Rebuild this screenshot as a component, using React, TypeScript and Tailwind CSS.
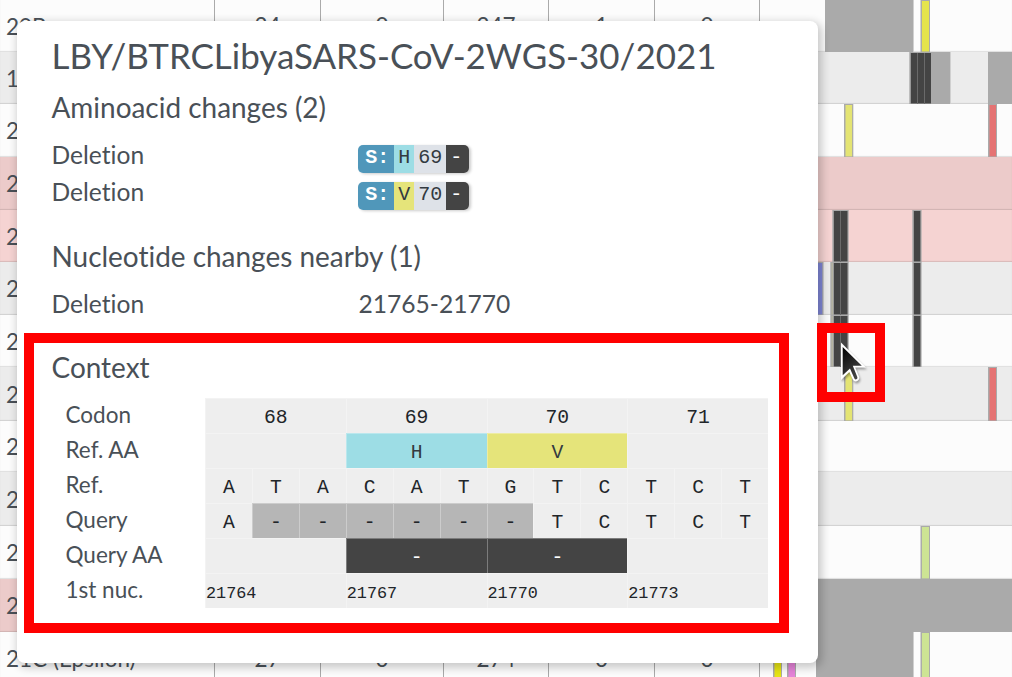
import React from "react";

type Mark = { x: number; w: number; fill: string; kind?: "block" | "joined" };
type Row = { h: string; bg: string; label: string; cells?: string[]; marks: Mark[] };

const DEL = "#444444";
const even = "bg-[#fcfcfc]";
const odd = "bg-[#ececec]";

/* x offsets of the marks are relative to the left edge of the sequence track */
const rows: Row[] = [
  { h: "h-[52px]", bg: even, label: "20B", cells: ["24", "0", "247", "1", "0"], marks: [{ x: 65, w: 88, fill: "#aaaaaa", kind: "block" }, { x: 160.5, w: 9.5, fill: "#e5e44c" }] },
  { h: "h-[52px]", bg: odd, label: "1", marks: [{ x: 150, w: 40, fill: "#aaaaaa", kind: "block" }, { x: 228, w: 30, fill: "#aaaaaa", kind: "block" }, { x: 149.3, w: 22.7, fill: DEL }, { x: 157, w: 1, fill: DEL, kind: "joined" }, { x: 164, w: 1, fill: DEL, kind: "joined" }] },
  { h: "h-[53px]", bg: even, label: "2", marks: [{ x: 84, w: 9.3, fill: "#e4e473" }, { x: 228, w: 9, fill: "#e57373" }] },
  { h: "h-[53px]", bg: "bg-[#eccbca]", label: "2", marks: [] },
  { h: "h-[52px]", bg: "bg-[#f5d3d2]", label: "2", marks: [{ x: 72.3, w: 16.4, fill: DEL }, { x: 80, w: 1, fill: DEL, kind: "joined" }, { x: 152.3, w: 9.3, fill: DEL }] },
  { h: "h-[53px]", bg: odd, label: "2", marks: [{ x: 55, w: 8.5, fill: "#7f86d6" }, { x: 70.3, w: 6, fill: "#cbc98c" }, { x: 72.3, w: 16.4, fill: DEL }, { x: 80, w: 1, fill: DEL, kind: "joined" }, { x: 152.3, w: 9.3, fill: DEL }] },
  { h: "h-[52px]", bg: even, label: "2", marks: [{ x: 70.3, w: 6, fill: "#cbc98c" }, { x: 72.3, w: 16.4, fill: DEL }, { x: 80, w: 1, fill: DEL, kind: "joined" }, { x: 152.3, w: 9.3, fill: DEL }] },
  { h: "h-[54px]", bg: odd, label: "2", marks: [{ x: 84, w: 9.3, fill: "#e4e473" }, { x: 228, w: 9, fill: "#e57373" }] },
  { h: "h-[51px]", bg: even, label: "2", marks: [] },
  { h: "h-[54px]", bg: odd, label: "2", marks: [] },
  { h: "h-[53px]", bg: even, label: "2", marks: [{ x: 160.5, w: 9.5, fill: "#cde494" }] },
  { h: "h-[53px]", bg: "bg-[#eccbca]", label: "2", marks: [{ x: 0, w: 260, fill: "#aaaaaa", kind: "block" }] },
  { h: "h-[53px]", bg: even, label: "21C (Epsilon)", cells: ["27", "0", "274", "0", "0"], marks: [{ x: 13, w: 9, fill: "#e6e414" }, { x: 27, w: 9, fill: "#e583d8" }, { x: 56, w: 97, fill: "#aaaaaa", kind: "block" }, { x: 160.5, w: 9.5, fill: "#cde494" }] },
];

const columns = ["w-[106px]", "w-[123px]", "w-[105px]", "w-[106px]", "w-[105px]"];

function Track({ marks }: { marks: Mark[] }) {
  return (
    <svg className="h-full w-[252px] shrink-0 overflow-hidden" aria-hidden="true">
      {marks.map((m, i) =>
        m.kind === "joined" ? (
          <rect key={i} x={m.x} y="1" width="1" height="100%" fill="#6a6a6a" />
        ) : m.kind === "block" ? (
          <g key={i}>
            <rect x={m.x} y="0" width={m.w} height="100%" fill={m.fill} />
            <rect x={m.x + m.w} y="0" width="1" height="100%" fill="#d0d0d0" />
          </g>
        ) : (
          <g key={i}>
            <rect x={m.x} y="0" width={m.w} height="100%" fill="#aaaaaa" />
            <svg x={m.x + 1.3} y="1" width={m.w - 2.3} height="100%">
              <rect width="100%" height="97%" fill={m.fill} />
            </svg>
          </g>
        ),
      )}
    </svg>
  );
}

function ResultRow({ row }: { row: Row }) {
  return (
    <div className={`flex w-full shrink-0 ${row.h} ${row.bg} shadow-[inset_0_-1px_1px_rgba(0,0,0,0.12)]`}>
      <div className="flex w-[215px] items-center border-r border-[#aaaaaa] pl-1.5 pt-px">{row.label}</div>
      {columns.map((w, i) => (
        <div key={i} className={`${w} flex items-center justify-center border-r border-[#aaaaaa]`}>
          {row.cells?.[i]}
        </div>
      ))}
      <Track marks={row.marks} />
    </div>
  );
}

function Badge({ from, pos, color }: { from: string; pos: string; color: string }) {
  return (
    <span className="flex h-[28.5px] overflow-hidden rounded-[5px] font-['Liberation_Mono',monospace] text-[20px] leading-[26px] text-[#333a40] shadow-[2px_1px_3px_rgba(0,0,0,0.2)]">
      <span className="w-9 bg-[#5097ba] pl-[7px] font-bold text-white">S:</span>
      <span className={`w-5 text-center ${color}`}>{from}</span>
      <span className="w-8 bg-[#dee2e8] text-center">{pos}</span>
      <span className="w-[23px] bg-[#444444] pr-[3px] text-center text-white">-</span>
    </span>
  );
}

const cell = "flex h-[35px] items-center justify-center border-l border-t border-white/30 pt-[5px]";

function Codons({ values, fills }: { values: string[]; fills?: string[] }) {
  return values.map((v, i) => (
    <div key={i} className={`${cell} col-span-3 ${fills?.[i] ?? "bg-[#eeeeee]"}`}>{v}</div>
  ));
}

function Bases({ seq }: { seq: string }) {
  return seq.split("").map((c, i) => (
    <div key={i} className={`${cell} ${c === "-" ? "bg-[#b6b6b6]" : "bg-[#eeeeee]"}`}>{c}</div>
  ));
}

function Context() {
  return (
    <div className="mt-[13.9px] flex">
      <div className="flex w-[153.5px] flex-col pl-[14px] text-[22.5px] leading-[34px]">
        {["Codon", "Ref. AA", "Ref.", "Query", "Query AA", "1st nuc."].map((t) => (
          <div key={t} className="h-[35px]">{t}</div>
        ))}
      </div>
      <div className="grid w-[563px] grid-cols-12 font-['Liberation_Mono',monospace] text-[19.7px] leading-6 text-[#212529]">
        <Codons values={["68", "69", "70", "71"]} />
        <Codons values={["", "H", "V", ""]} fills={["bg-[#eeeeee]", "bg-[#9ddde5] text-[#333a40]", "bg-[#e5e47a] text-[#333a40]", "bg-[#eeeeee]"]} />
        <Bases seq="ATACATGTCTCT" />
        <Bases seq="A------TCTCT" />
        <Codons values={["", "-", "-", ""]} fills={["bg-[#eeeeee]", "bg-[#444444] text-white", "bg-[#444444] text-white", "bg-[#eeeeee]"]} />
        {["21764", "21767", "21770", "21773"].map((n) => (
          <div key={n} className="col-span-3 flex h-[35px] items-center border-l border-t border-white/30 bg-[#eeeeee] pt-[6px] text-[16.8px]">{n}</div>
        ))}
      </div>
    </div>
  );
}

function Tooltip() {
  return (
    <section className="absolute left-[17px] top-[21px] flex h-[642px] w-[801px] flex-col rounded-[8px] bg-white pl-[34.5px] pt-3 shadow-[2px_3px_8px_2px_rgba(0,0,0,0.2)]">
      <h1 className="h-[45px] text-[34.93px] leading-[45px]">LBY/BTRCLibyaSARS-CoV-2WGS-30/2021</h1>
      <h2 className="mt-3 h-[35px] text-[27.95px] leading-[35px]">Aminoacid changes (2)</h2>
      <div className="mt-[11px] grid grid-cols-[306.7px_auto] justify-start text-[24.6px] leading-[37px]">
        <div>Deletion</div>
        <div className="flex h-[37px] pt-[8.5px]"><Badge from="H" pos="69" color="bg-[#9ddde5]" /></div>
        <div>Deletion</div>
        <div className="flex h-[37px] pt-[8.5px]"><Badge from="V" pos="70" color="bg-[#e5e47a]" /></div>
      </div>
      <h2 className="mt-[29px] h-[34px] text-[27.95px] leading-[35px]">Nucleotide changes nearby (1)</h2>
      <div className="mt-3 grid grid-cols-[307px_auto] justify-start text-[24.6px] leading-[37px]">
        <div>Deletion</div>
        <div>21765-21770</div>
      </div>
      <h2 className="mt-7 h-[34px] text-[27.95px] leading-[35px]">Context</h2>
      <Context />
    </section>
  );
}

function Cursor() {
  return (
    <svg className="absolute left-[837px] top-[338px] h-[50px] w-[36px] drop-shadow-[1px_2px_1px_rgba(0,0,0,0.35)]" viewBox="0 0 36 50">
      <defs>
        <linearGradient id="pointer" x1="0" y1="0" x2="0.5" y2="1">
          <stop offset="0" stopColor="#000" />
          <stop offset="1" stopColor="#444" />
        </linearGradient>
      </defs>
      <path d="M4 4.5 V42 L12.3 34 L16 42 Q18 44.5 21 42.5 Q23 41 22 38.5 L18.2 29.5 H29 Z" fill="white" />
      <path d="M5.7 9 V37.3 L13 30.5 L17.4 40.6 Q18.3 42 19.8 41.1 Q20.8 40.3 20.3 39 L15.8 27.8 H24.8 Z" fill="url(#pointer)" />
    </svg>
  );
}

export default function App() {
  return (
    <main className="relative h-[677px] w-[1012px] overflow-hidden font-['Lato',sans-serif] text-[#495057] [font-variant-ligatures:none]">
      <div className="flex flex-col text-[22.5px]">
        {rows.map((row, i) => <ResultRow key={i} row={row} />)}
      </div>
      <Tooltip />
      <div className="absolute left-[24px] top-[333px] h-[300px] w-[765px] border-[10px] border-[#ff0000]" />
      <div className="absolute left-[817px] top-[323px] h-[79px] w-[68px] border-[10px] border-[#ff0000]" />
      <Cursor />
    </main>
  );
}
